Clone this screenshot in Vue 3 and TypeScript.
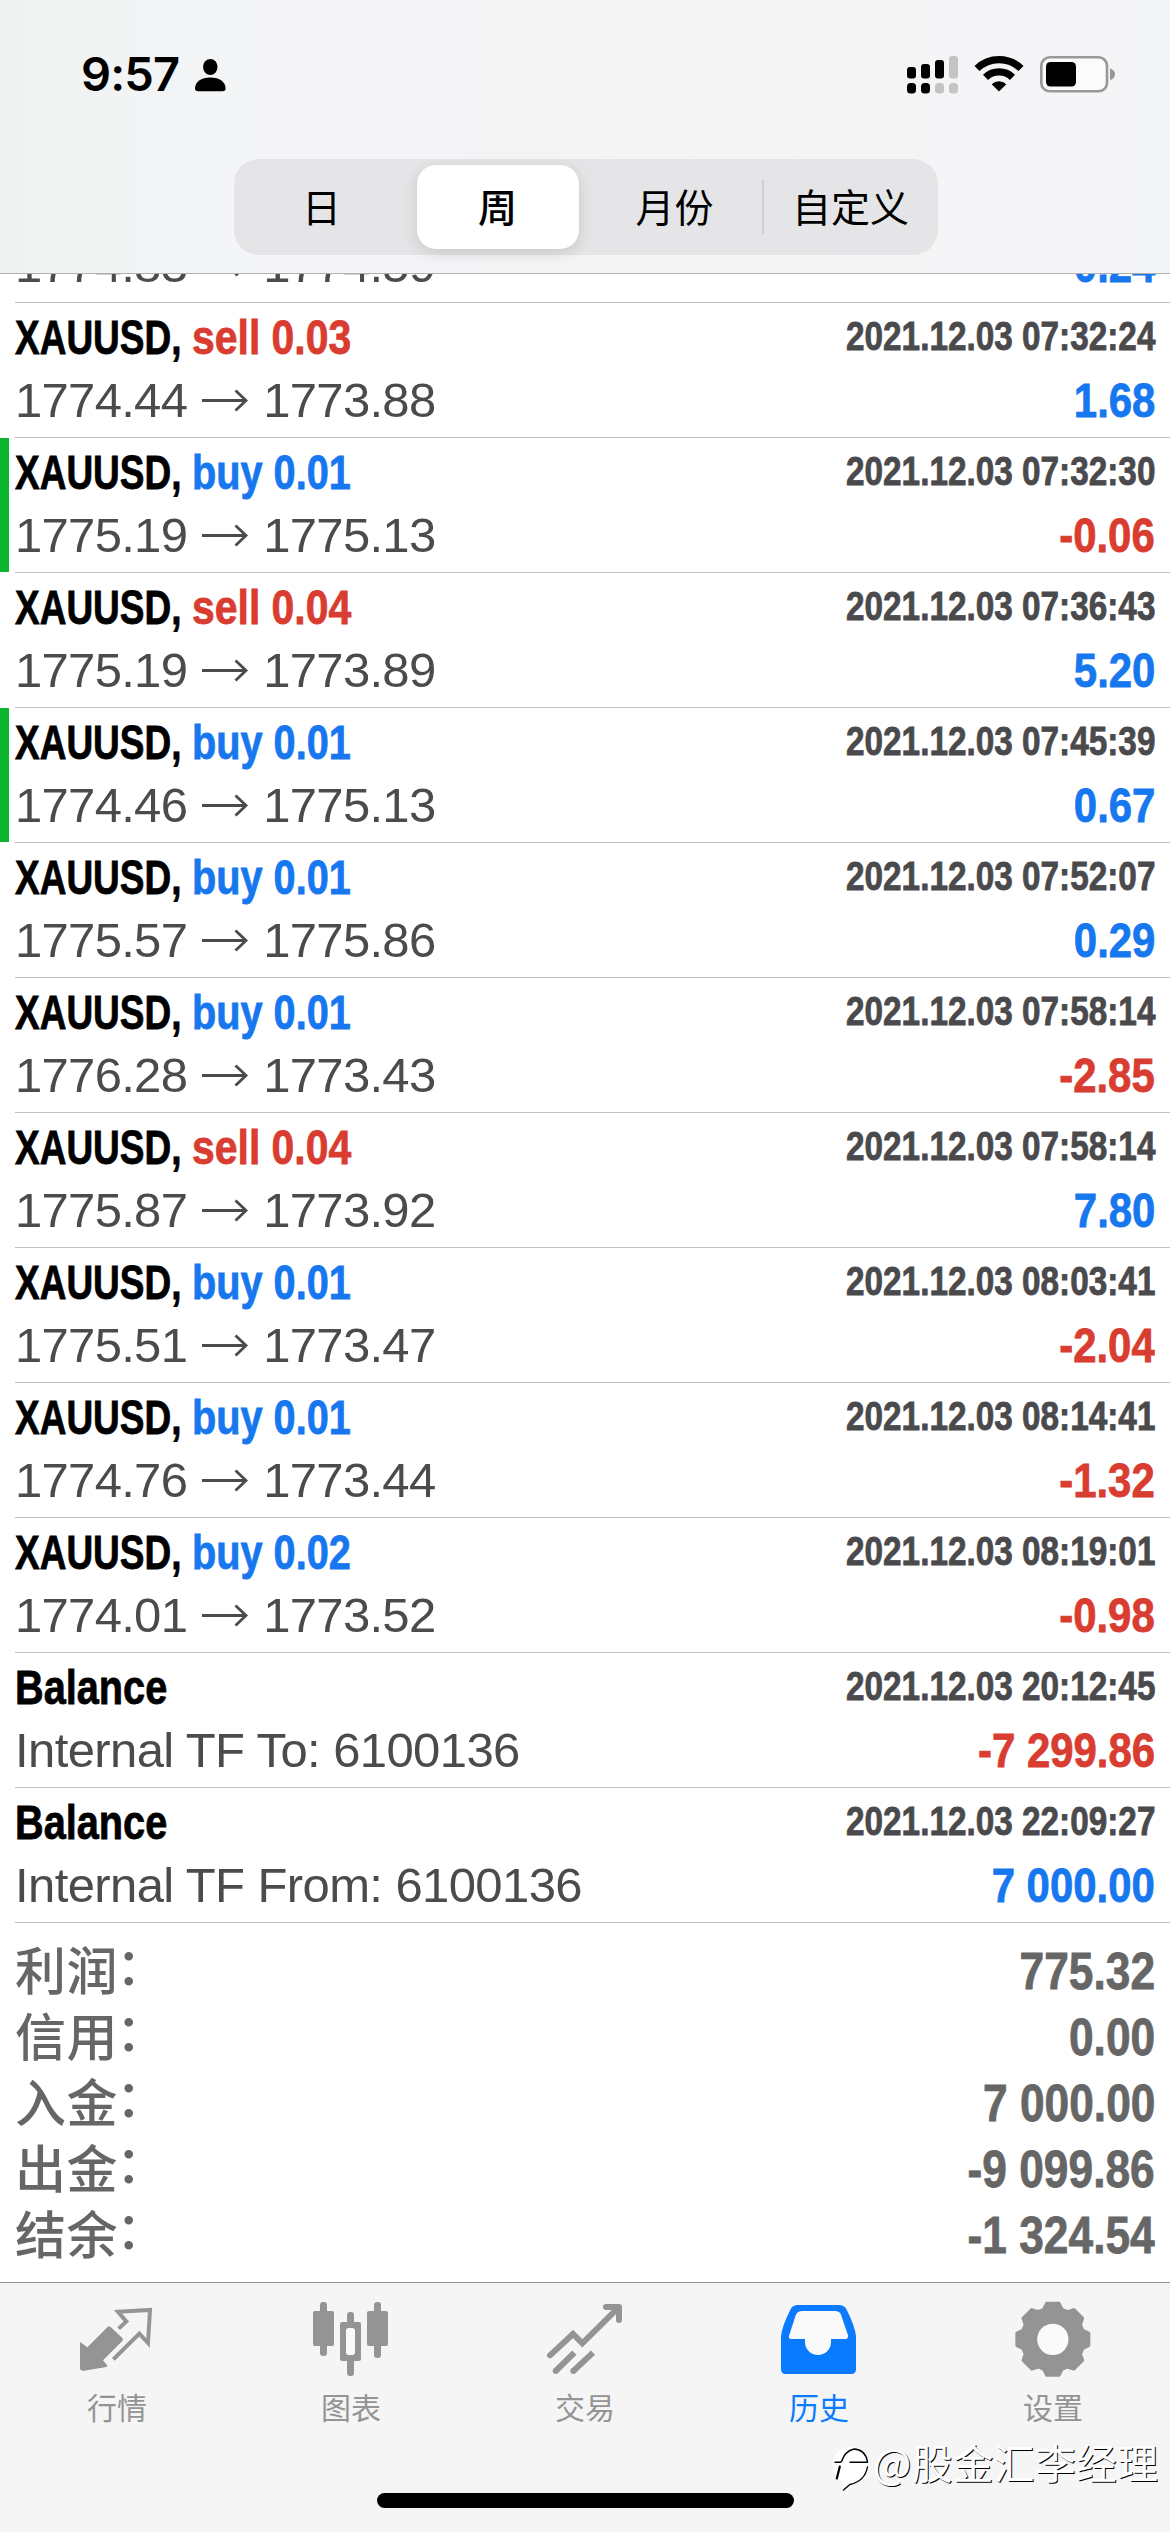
<script setup lang="ts">
interface Deal {
  symbol: string
  side?: 'buy' | 'sell'
  volume?: string
  time?: string
  open?: string
  close?: string
  note?: string
  profit: string
  marked?: boolean
}

// The first entry is scrolled half under the header, so only its price line shows
const deals: Deal[] = [
  { symbol: 'XAUUSD', open: '1774.83', close: '1774.59', profit: '0.24' },
  { symbol: 'XAUUSD', side: 'sell', volume: '0.03', time: '2021.12.03 07:32:24', open: '1774.44', close: '1773.88', profit: '1.68' },
  { symbol: 'XAUUSD', side: 'buy', volume: '0.01', time: '2021.12.03 07:32:30', open: '1775.19', close: '1775.13', profit: '-0.06', marked: true },
  { symbol: 'XAUUSD', side: 'sell', volume: '0.04', time: '2021.12.03 07:36:43', open: '1775.19', close: '1773.89', profit: '5.20' },
  { symbol: 'XAUUSD', side: 'buy', volume: '0.01', time: '2021.12.03 07:45:39', open: '1774.46', close: '1775.13', profit: '0.67', marked: true },
  { symbol: 'XAUUSD', side: 'buy', volume: '0.01', time: '2021.12.03 07:52:07', open: '1775.57', close: '1775.86', profit: '0.29' },
  { symbol: 'XAUUSD', side: 'buy', volume: '0.01', time: '2021.12.03 07:58:14', open: '1776.28', close: '1773.43', profit: '-2.85' },
  { symbol: 'XAUUSD', side: 'sell', volume: '0.04', time: '2021.12.03 07:58:14', open: '1775.87', close: '1773.92', profit: '7.80' },
  { symbol: 'XAUUSD', side: 'buy', volume: '0.01', time: '2021.12.03 08:03:41', open: '1775.51', close: '1773.47', profit: '-2.04' },
  { symbol: 'XAUUSD', side: 'buy', volume: '0.01', time: '2021.12.03 08:14:41', open: '1774.76', close: '1773.44', profit: '-1.32' },
  { symbol: 'XAUUSD', side: 'buy', volume: '0.02', time: '2021.12.03 08:19:01', open: '1774.01', close: '1773.52', profit: '-0.98' },
  { symbol: 'Balance', time: '2021.12.03 20:12:45', note: 'Internal TF To: 6100136', profit: '-7 299.86' },
  { symbol: 'Balance', time: '2021.12.03 22:09:27', note: 'Internal TF From: 6100136', profit: '7 000.00' },
]

const totals = [
  { label: '利润', value: '775.32' },
  { label: '信用', value: '0.00' },
  { label: '入金', value: '7 000.00' },
  { label: '出金', value: '-9 099.86' },
  { label: '结余', value: '-1 324.54' },
]

const periods = ['日', '周', '月份', '自定义']
const activePeriod = '周'

const tabs = [
  { id: 'quotes', label: '行情' },
  { id: 'chart', label: '图表' },
  { id: 'trade', label: '交易' },
  { id: 'history', label: '历史' },
  { id: 'settings', label: '设置' },
]

// Eight-tooth cog outline around (125.5, 127)
const gearPoints = Array.from({ length: 8 }, (_, i) => {
  const a = (i * Math.PI) / 4
  return [[-27, -89], [-18, -107], [18, -107], [27, -89]]
    .map(([x, y]) => `${(125.5 + x * Math.cos(a) - y * Math.sin(a)).toFixed(1)},${(127 + x * Math.sin(a) + y * Math.cos(a)).toFixed(1)}`)
    .join(' ')
}).join(' ')
</script>

<template>
  <div class="screen">
    <header class="header">
      <div class="status">
        <div class="status-left">
          <span class="clock">9:57</span>
          <svg class="person" viewBox="0 0 31 33" width="31" height="33">
            <ellipse cx="15.3" cy="8" rx="7.2" ry="8" />
            <path d="M0 29.500C0 23 6 18.500 15.300 18.500S30.600 23 30.600 29.500Q30.600 32.300 27.500 32.300H3.200Q0 32.300 0 29.500Z" />
          </svg>
        </div>
        <div class="status-right">
          <svg class="signal" viewBox="0 0 52 38" width="52" height="38">
            <rect x="0" y="11" width="9" height="11.500" rx="3" />
            <rect x="14" y="8" width="9" height="14.500" rx="3" />
            <rect x="28" y="4" width="9" height="18.500" rx="3" />
            <rect class="dim" x="42" y="0" width="9" height="22.500" rx="3" />
            <rect x="0" y="27" width="9" height="10.500" rx="3.500" />
            <rect x="14" y="27" width="9" height="10.500" rx="3.500" />
            <rect class="dim" x="28" y="27" width="9" height="10.500" rx="3.500" />
            <rect class="dim" x="42" y="27" width="9" height="10.500" rx="3.500" />
          </svg>
          <svg class="wifi" viewBox="0 0 50 37" width="50" height="37">
            <g fill="none" stroke="#000" stroke-width="7.200">
              <path d="M3 13.500A31.500 31.500 0 0 1 47 13.500" />
              <path d="M11.500 22.300A19.500 19.500 0 0 1 38.500 22.300" />
            </g>
            <path d="M25 36.500L17.700 29.200A10.500 10.500 0 0 1 32.300 29.200Z" />
          </svg>
          <svg class="battery" viewBox="0 0 76 37" width="76" height="37">
            <rect x="1.300" y="1.300" width="65.700" height="34" rx="8.500" fill="#fbfbfb" stroke="#989898" stroke-width="2.600" />
            <rect x="6" y="6" width="30" height="24.500" rx="4.500" />
            <path d="M70 12.500Q75 14 75 18.300T70 24.100Z" fill="#989898" />
          </svg>
        </div>
      </div>
      <nav class="segments">
        <div v-for="(p, i) in periods" :key="p" class="segment" :class="{ active: p === activePeriod, late: i > 1, divided: i === 3 }">
          <span>{{ p }}</span>
        </div>
      </nav>
    </header>

    <main class="list">
      <article v-for="(d, i) in deals" :key="i" class="deal" :class="{ marked: d.marked, partial: !d.time }">
        <div v-if="d.time" class="line top">
          <div class="title cond">
            <template v-if="d.side"><span class="symbol">{{ d.symbol }}, </span><span class="order" :class="d.side">{{ d.side }} {{ d.volume }}</span></template>
            <span v-else class="balance">{{ d.symbol }}</span>
          </div>
          <div class="time cond">{{ d.time }}</div>
        </div>
        <div class="line bottom">
          <div v-if="d.open" class="price">
            <span>{{ d.open }}</span>
            <svg class="arrow" viewBox="0 0 48 24" width="48" height="24">
              <path d="M1 12.500H45M34.500 2.500L45 12.500L34.500 22.500" />
            </svg>
            <span>{{ d.close }}</span>
          </div>
          <div v-else class="price note">{{ d.note }}</div>
          <div class="profit cond" :class="d.profit.startsWith('-') ? 'loss' : 'gain'">{{ d.profit }}</div>
        </div>
      </article>

      <section class="totals">
        <div v-for="t in totals" :key="t.label" class="total">
          <span class="total-label">{{ t.label }}<span class="colon">：</span></span>
          <span class="total-value cond">{{ t.value }}</span>
        </div>
      </section>
    </main>

    <footer class="tabbar">
      <div class="tabs">
        <div v-for="t in tabs" :key="t.id" class="tab" :class="{ current: t.id === 'history' }">
          <svg class="tab-icon" viewBox="0 0 252 252" width="84" height="84">
            <template v-if="t.id === 'quotes'">
              <path d="M15 135L37 151L97 91Q102 85 107 90L142 123Q146 128 142 132L84 190L96 204Q99 208 94 210L27 221Q15 222 15 214Z" />
              <path class="stroke" stroke-width="12" d="M131 95L154 73L129 44.500L225 39L219 138L193 110L115 187" />
            </template>
            <template v-else-if="t.id === 'chart'">
              <rect x="33" y="15" width="21" height="162" rx="9" />
              <rect x="12" y="42" width="63" height="105" rx="6" />
              <rect x="195" y="15" width="21" height="168" rx="9" />
              <rect x="174" y="42" width="63" height="105" rx="6" />
              <rect x="114" y="45" width="21" height="192" rx="9" />
              <rect x="93" y="75" width="63" height="117" rx="6" />
              <rect x="111" y="93" width="27" height="81" rx="8" fill="#fafafa" />
            </template>
            <template v-else-if="t.id === 'trade'">
              <path class="stroke" stroke-width="18" stroke-linecap="round" d="M21 175L90 111L118 139L226 32" />
              <path class="stroke" stroke-width="18" stroke-linecap="round" stroke-linejoin="round" d="M189 30H228V69" />
              <path class="stroke" stroke-width="18" d="M38 222L94 167M91 222L150 167" />
              <circle cx="38" cy="222" r="9" />
              <circle cx="91" cy="222" r="9" />
            </template>
            <template v-else-if="t.id === 'history'">
              <path d="M12 118Q14 90 40 38Q47 24 62 24H186Q202 24 209 38Q235 90 237 118V217Q237 231 223 231H26Q12 231 12 217Z" />
              <path fill="#fafafa" d="M36 117L56 55Q61 42 76 42H174Q188 42 192 53L213 115Q214 126 206 126H162V135A39 39 0 0 1 84 135V126H43Q34 126 36 117Z" />
            </template>
            <template v-else>
              <polygon :points="gearPoints" stroke="currentColor" stroke-width="11" stroke-linejoin="round" />
              <circle cx="125.500" cy="127" r="47" fill="#fafafa" />
            </template>
          </svg>
          <span class="tab-label">{{ t.label }}</span>
        </div>
      </div>
      <div class="home-bar"></div>
    </footer>

    <div class="watermark">
      <svg viewBox="0 0 42 48" width="42" height="48">
        <g fill="none" stroke-linecap="round">
          <circle cx="20" cy="20" r="18.500" fill="#fff" />
          <path d="M14 43L19 37Q32 34 36 22" stroke="#fff" stroke-width="5" />
          <path d="M4 17.300H9L10.500 16.500Q14 6 23 4Q34 4.500 36.500 16.500M19 17.300H36.500M36.500 22Q34 36 19 39.500L12.500 45" stroke="#000" stroke-width="1.400" />
          <path d="M8.800 21.500L5.800 33.500" stroke="#000" stroke-width="2.200" />
        </g>
      </svg>
      <span>@股金汇李经理</span>
    </div>
  </div>
</template>

<style>
body {
  margin: 0;
  background: #fff;
}
</style>

<style scoped>
.screen {
  position: relative;
  width: 1170px;
  height: 2532px;
  display: flex;
  flex-direction: column;
  overflow: hidden;
  background: #fff;
  font-family: "Liberation Sans", "Noto Sans CJK SC", sans-serif;
}
.cond {
  font-weight: 700;
  -webkit-text-stroke: 0.800px currentColor;
}
.header {
  flex: none;
  box-sizing: border-box;
  height: 274px;
  border-bottom: 1px solid #b0b0b3;
  background: linear-gradient(90deg, #f0f1f1 0, #f4f5f7 240px, #f4f4f5 700px, #f4f5f7 100%);
  display: flex;
  flex-direction: column;
  align-items: center;
}
.status {
  width: 100%;
  height: 159px;
  box-sizing: border-box;
  padding: 0 54px 0 81px;
  display: flex;
  justify-content: space-between;
  align-items: flex-start;
}
.status-left {
  display: flex;
  align-items: flex-start;
}
.clock {
  width: 114px;
  margin-top: 45px;
  line-height: 58px;
  font-family: Inter, sans-serif;
  font-weight: 600;
  font-size: 47px;
  letter-spacing: -0.900px;
}
.person {
  margin-top: 59px;
}
.status-right {
  display: flex;
  margin-top: 56px;
}
.signal {
  margin-right: 15px;
}
.wifi {
  margin: -1px 16px 0 0;
}
.dim {
  fill: #c4c4c5;
}
.segments {
  width: 704px;
  height: 96px;
  margin-left: 1px;
  border-radius: 25px;
  background: #e5e5e7;
  display: grid;
  grid-template-columns: repeat(4, 1fr);
}
.segment {
  display: flex;
  padding: 6px;
  font-family: "Noto Sans CJK SC", sans-serif;
  font-size: 39px;
  line-height: 81px;
}
.segment span {
  flex: 1;
  height: 84px;
  text-align: center;
  border-radius: 19px;
}
.segment.active span {
  margin: 0 1px;
  background: #fff;
  font-weight: 500;
  box-shadow: 0 4px 16px rgba(0, 0, 0, 0.13);
}
.segment.late {
  padding: 6px 5px 6px 7px;
}
.segment.divided {
  background: linear-gradient(#cfcfd1, #cfcfd1) 0 21px / 2px 54px no-repeat;
}
.list {
  flex: 1;
  min-height: 0;
  overflow: hidden;
}
.deal {
  position: relative;
  box-sizing: border-box;
  height: 135px;
  padding: 6px 15px 0;
  background: linear-gradient(#c0c0c2, #c0c0c2) 15px 100% / 100% 1px no-repeat;
}
.deal.partial {
  height: 66px;
  margin-top: -37px;
  padding-top: 0;
}
.deal.marked::before {
  content: "";
  position: absolute;
  left: 0;
  top: 0;
  width: 9px;
  height: 134px;
  background: #0bb52e;
}
.line {
  display: flex;
  justify-content: space-between;
  white-space: nowrap;
  height: 63px;
  line-height: 56px;
}
.title {
  display: flex;
  font-size: 49px;
  color: #000;
}
/* Condensed lettering: each span is squeezed from its own starting edge */
.symbol {
  width: 177px;
  white-space: pre;
  transform: scaleX(0.755);
  transform-origin: 0 50%;
}
.order,
.balance {
  transform: scaleX(0.81);
  transform-origin: 0 50%;
}
.order.sell {
  transform: scaleX(0.835);
}
.time {
  font-size: 40px;
  line-height: 54px;
  color: #4a4a4d;
  transform: scaleX(0.833);
  transform-origin: 100% 50%;
}
.price {
  display: flex;
  align-items: center;
  height: 56px;
  font-size: 49px;
  letter-spacing: -0.700px;
  color: #4b4b4e;
}
.price.note {
  letter-spacing: -0.600px;
}
.arrow {
  margin: 0 14px 0 14px;
  fill: none;
  stroke: #4b4b4e;
  stroke-width: 2.800;
}
.profit {
  font-size: 49px;
  transform: scaleX(0.855);
  transform-origin: 100% 50%;
}
.buy,
.gain {
  color: #1777ef;
}
.sell,
.loss {
  color: #d93c30;
}
.totals {
  padding: 15px 15px 0 15px;
  color: #666;
}
.total {
  display: flex;
  justify-content: space-between;
  height: 66px;
  line-height: 66px;
}
.total-label {
  margin-top: -3px;
  font-family: "Noto Sans CJK SC", sans-serif;
  font-weight: 500;
  font-size: 51px;
  letter-spacing: 0.500px;
}
.colon {
  position: relative;
  left: -2px;
  top: -5px;
}
.total-value {
  font-size: 52px;
  transform: scaleX(0.852);
  transform-origin: 100% 50%;
}
.tabbar {
  flex: none;
  height: 249px;
  border-top: 1px solid #939396;
  background: #f5f5f5;
  display: flex;
  flex-direction: column;
  align-items: center;
}
.tabs {
  width: 100%;
  height: 210px;
  display: grid;
  grid-template-columns: repeat(5, 1fr);
}
.tab {
  display: flex;
  flex-direction: column;
  align-items: center;
  padding-top: 14px;
  color: #949494;
}
.tab.current {
  color: #0a7aff;
}
.tab-icon {
  fill: currentColor;
}
.stroke {
  fill: none;
  stroke: currentColor;
}
.tab-label {
  margin-top: 5px;
  font-family: "Noto Sans CJK SC", sans-serif;
  font-size: 30px;
  line-height: 40px;
}
.home-bar {
  width: 417px;
  height: 15px;
  border-radius: 8px;
  background: #000;
}
.watermark {
  position: absolute;
  left: 831px;
  top: 2432px;
  display: flex;
  align-items: center;
  height: 58px;
  color: #fff;
  font-family: "Noto Sans CJK SC", sans-serif;
  font-size: 40.500px;
  letter-spacing: 0.600px;
  text-shadow: 1px 1px 0 #000;
}
.watermark svg {
  margin-top: 15px;
}
</style>
